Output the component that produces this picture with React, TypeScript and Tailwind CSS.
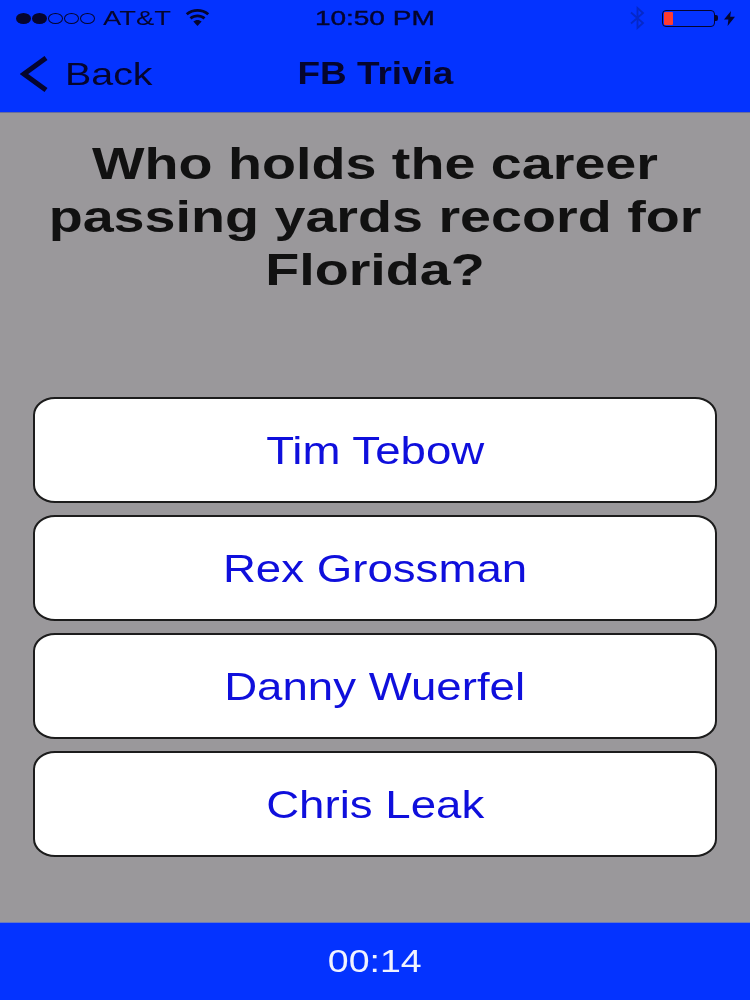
const answers = ['Tim Tebow', 'Rex Grossman', 'Danny Wuerfel', 'Chris Leak'];

function StatusBar() {
  return (
    <div className="grid h-[36px] grid-cols-[1fr_auto_1fr] items-center blur-[0.5px]">
      <div className="flex items-center pl-[16px]">
        <div className="flex items-center gap-[1px]">
          <span className="h-[11px] w-[15px] rounded-[50%] bg-[#05052e]" />
          <span className="h-[11px] w-[15px] rounded-[50%] bg-[#05052e]" />
          <span className="h-[11px] w-[15px] rounded-[50%] border border-[#05052e]" />
          <span className="h-[11px] w-[15px] rounded-[50%] border border-[#05052e]" />
          <span className="h-[11px] w-[15px] rounded-[50%] border border-[#05052e]" />
        </div>
        <span className="ml-[8px] inline-block w-[49px] origin-left scale-x-[1.37] text-[20px] whitespace-nowrap text-[#05052e]">
          AT&amp;T
        </span>
        <svg className="mt-[-2px] ml-[31px]" width="29" height="17" viewBox="0 0 28 18" fill="#05052e">
          <path d="M14 18 9.6 13.2C12.3 11 15.7 11 18.4 13.2Z" />
          <path d="M7.6 11 5.6 8.8C10.6 4.8 17.4 4.8 22.4 8.8L20.4 11C16.6 8 11.4 8 7.6 11Z" />
          <path d="M3.6 6.6 1.6 4.4C9 -1.4 19 -1.4 26.4 4.4L24.4 6.6C18.2 1.8 9.8 1.8 3.6 6.6Z" />
        </svg>
      </div>
      <span className="inline-block scale-x-[1.4] text-center text-[20px] font-medium whitespace-nowrap text-[#05052e] [-webkit-text-stroke:0.4px_#05052e]">
        10:50 PM
      </span>
      <div className="flex items-center justify-end pr-[15px]">
        <svg width="17" height="24" viewBox="0 0 17 24" fill="none" stroke="#0528c8" strokeWidth="1.8">
          <path d="M2 6.5 14 17 8.5 22V2L14 7 2 17.5" />
        </svg>
        <div className="ml-[16px] flex items-center">
          <div className="h-[17px] w-[53px] rounded-[4px] border border-[#05052e] p-[1px]">
            <div className="h-full w-[9px] rounded-[1px] bg-[#ff3b30]" />
          </div>
          <span className="h-[6px] w-[3px] rounded-r-[2px] bg-[#05052e]" />
        </div>
        <svg className="ml-[6px]" width="11" height="15" viewBox="0 0 11 15" fill="#05052e">
          <path d="M7 0 0 8.5H4.4L3.6 15 11 5.8H6.2Z" />
        </svg>
      </div>
    </div>
  );
}

function NavBar() {
  return (
    <div className="grid h-[76px] grid-cols-[1fr_auto_1fr] items-center pb-[1px] blur-[0.5px]">
      <div className="flex items-center pl-[20px]">
        <svg width="28" height="36" viewBox="0 0 28 36" fill="none" stroke="#05052e" strokeWidth="5">
          <path d="M26 2 4 18 26 34" />
        </svg>
        <span className="ml-[17px] inline-block w-[66px] origin-left scale-x-[1.23] text-[32px] leading-none text-[#05052e]">
          Back
        </span>
      </div>
      <span className="inline-block scale-x-[1.19] text-center text-[31px] leading-none font-bold whitespace-nowrap text-[#05052e]">
        FB Trivia
      </span>
      <div />
    </div>
  );
}

export default function App() {
  return (
    <div className="flex h-[1000px] w-[750px] flex-col overflow-hidden bg-[#9a989b] font-['Liberation_Sans',Arial,sans-serif]">
      <header className="h-[113px] border-b border-[#6a6f9c] bg-[#0433ff]">
        <StatusBar />
        <NavBar />
      </header>

      <main className="flex flex-1 flex-col items-center">
        <h1 className="mt-[24px] h-[260px] w-[564px] shrink-0 scale-x-[1.265] text-center text-[44px] leading-[53px] font-bold text-[#111] blur-[0.4px]">
          Who holds the career passing yards record for Florida?
        </h1>

        <div className="flex w-full flex-col gap-[12px] px-[33px]">
          {answers.map((answer) => (
            <button
              key={answer}
              type="button"
              className="flex h-[106px] items-center justify-center rounded-[22px/18px] border-2 border-[#1c1c1c] bg-white pt-[3px]"
            >
              <span className="inline-block scale-x-[1.17] text-[39px] whitespace-nowrap text-[#0f0fdc] blur-[0.3px]">
                {answer}
              </span>
            </button>
          ))}
        </div>
      </main>

      <footer className="flex h-[78px] items-center justify-center border-t border-[#6a7ac0] bg-[#0433ff] pt-[2px]">
        <span className="inline-block scale-x-[1.21] text-[31px] text-[#f0f2ff] blur-[0.3px]">00:14</span>
      </footer>
    </div>
  );
}
